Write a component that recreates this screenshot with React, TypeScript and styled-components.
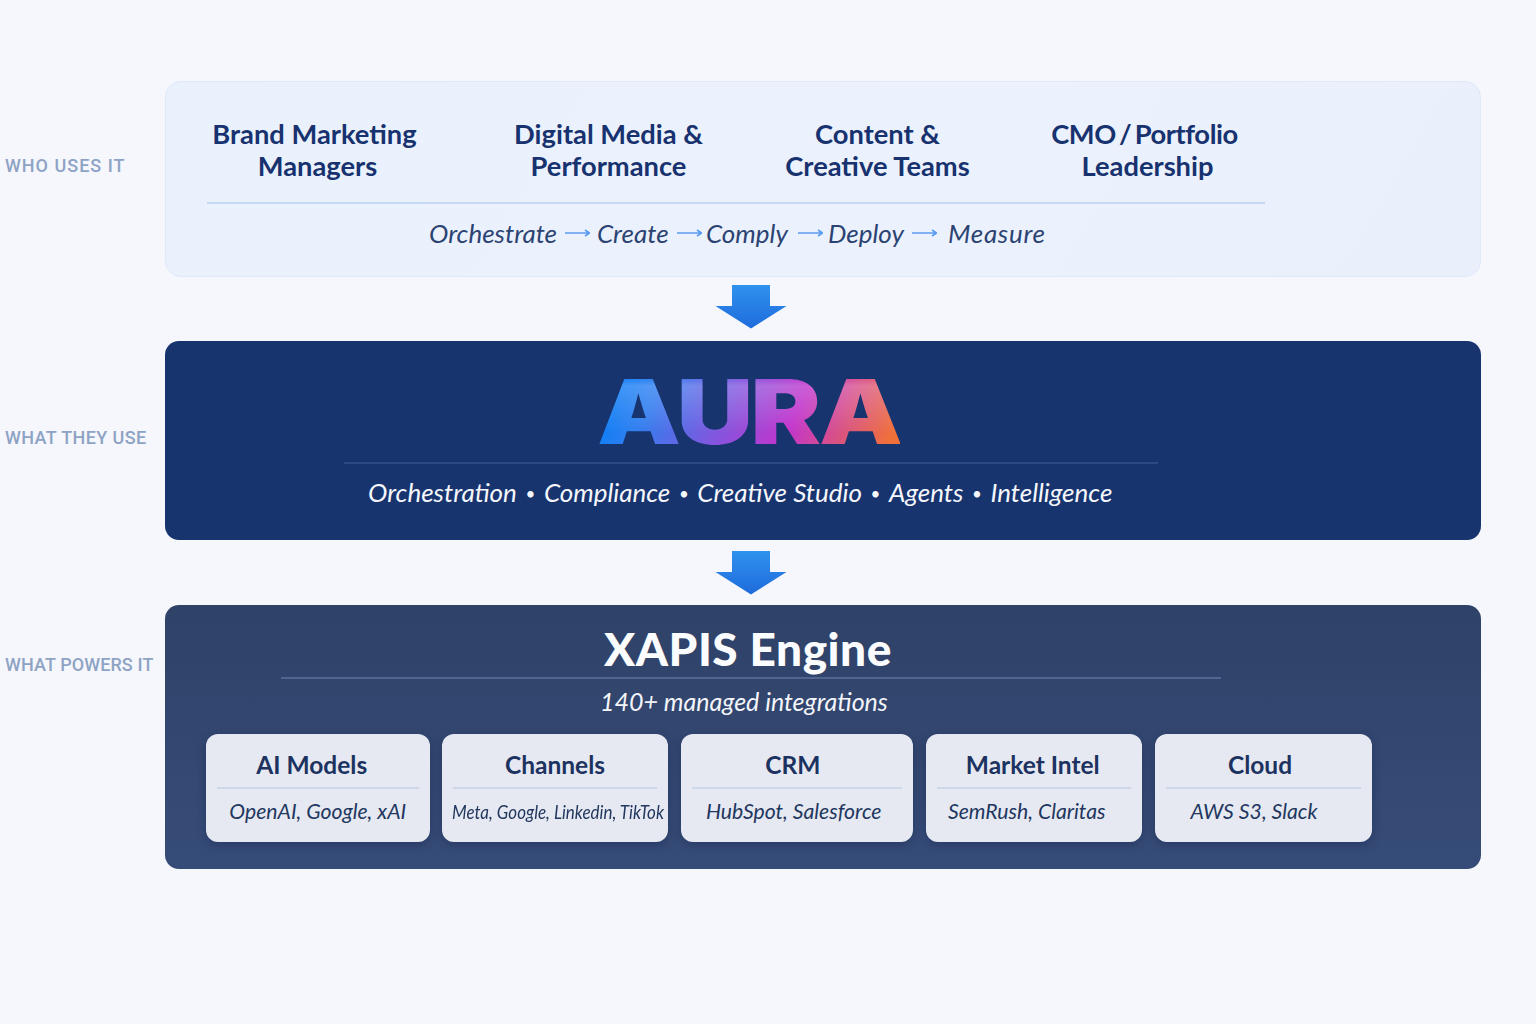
import React from "react";
import styled, { createGlobalStyle } from "styled-components";

const GlobalStyle = createGlobalStyle`
  html, body { margin: 0; padding: 0; }
  body {
    background: #f5f7fc;
    font-family: "Lato", "Liberation Sans", sans-serif;
  }
`;

const Page = styled.div`
  width: 1536px;
  height: 1024px;
  padding: 81px 55px 0 5px;
  box-sizing: border-box;
  overflow: hidden;
`;
const Row = styled.section`
  display: grid;
  grid-template-columns: 160px 1316px;
`;
const SideLabel = styled.div<{ $top: number; $ls: number }>`
  padding-top: ${(p) => p.$top}px;
  font-family: "Roboto", sans-serif;
  font-size: 18px;
  line-height: 24px;
  font-weight: 500;
  letter-spacing: ${(p) => p.$ls}px;
  color: #8ea3c4;
  white-space: nowrap;
`;
const UsersPanel = styled.div`
  height: 196px;
  box-sizing: border-box;
  padding: 36px 0 0 41px;
  background: linear-gradient(120deg, #e9f1fc 0%, #ecf2fd 60%, #e9f0fb 100%);
  border: 1px solid #dfe9f9;
  border-radius: 16px;
`;
const Inner = styled.div`
  width: 1058px;
`;
const Names = styled.div`
  display: flex;
  padding: 0 0 20px 4px;
  border-bottom: 2px solid #c5d9f5;
`;
const Name = styled.div<{ $w: number; $after: number }>`
  width: ${(p) => p.$w}px;
  margin-right: ${(p) => p.$after}px;
  flex: none;
  text-align: center;
  font-size: 27.3px;
  line-height: 32px;
  font-weight: 700;
  color: #17326f;
  white-space: nowrap;
`;
const NameLine = styled.span<{ $shift?: number; $tight?: boolean }>`
  display: block;
  padding-left: ${(p) => (p.$shift || 0) * 2}px;
  word-spacing: ${(p) => (p.$tight ? "-3px" : "0")};
  letter-spacing: ${(p) => (p.$tight ? "-0.4px" : "0")};
`;
const Flow = styled.div`
  display: flex;
  align-items: center;
  height: 30px;
  margin-top: 14px;
  padding-left: 222px;
  font-size: 26px;
  font-style: italic;
  color: #2b4373;
`;
const Word = styled.span<{ $w: number; $wide?: boolean }>`
  width: ${(p) => p.$w}px;
  flex: none;
  white-space: nowrap;
  letter-spacing: ${(p) => (p.$wide ? "0.7px" : "0")};
`;
const ArrowSvg = styled.svg<{ $l: number; $r: number }>`
  flex: none;
  width: 25px;
  height: 10px;
  margin: 0 ${(p) => p.$r}px 0 ${(p) => p.$l}px;
`;
const FlowArrow = ({ l, r }: { l: number; r: number }) => (
  <ArrowSvg $l={l} $r={r} viewBox="0 0 25 10">
    <path d="M0 5H24M20 2L24.5 5L20 8" fill="none" stroke="#5c9cf0" strokeWidth="1.6" />
  </ArrowSvg>
);
const ArrowWrap = styled.div`
  display: flex;
  justify-content: center;
  margin-left: 160px;
  width: 1172px;
  height: 64px;
  box-sizing: border-box;
  padding-top: 8px;
`;
const ArrowGap = styled(ArrowWrap)`
  height: 65px;
  padding-top: 11px;
`;
const DownSvg = styled.svg`
  width: 72px;
  height: 44px;
`;
const DownArrow = () => (
  <DownSvg viewBox="0 0 72 44">
    <defs>
      <linearGradient id="down" x1="0" y1="0" x2="0" y2="1">
        <stop offset="0" stopColor="#2f92ee" />
        <stop offset="1" stopColor="#1f6bdc" />
      </linearGradient>
    </defs>
    <path d="M17 0H55V21H71.500L36 43.500L0.500 21H17Z" fill="url(#down)" />
  </DownSvg>
);
const AuraPanel = styled.div`
  height: 199px;
  box-sizing: border-box;
  padding-top: 21px;
  background: #17346f;
  border-radius: 14px;
  display: flex;
  flex-direction: column;
`;
const AuraTitle = styled.div`
  align-self: flex-start;
  margin-left: 432px;
  height: 100px;
  font-family: "Inter", sans-serif;
  font-size: 90px;
  line-height: 100px;
  font-weight: 900;
  letter-spacing: -2px;
  transform: scaleX(1.175);
  transform-origin: left center;
  background:
    linear-gradient(180deg, rgba(255, 255, 255, 0) 15%, rgba(255, 255, 255, 0.2) 24%, rgba(255, 255, 255, 0) 72%),
    linear-gradient(112deg, #0a7df6 8%, #2f7ff0 20%, #8a52dc 46%, #c235cc 64%, #f0703a 94%);
  -webkit-background-clip: text;
  background-clip: text;
  color: transparent;
`;
const AuraRule = styled.div`
  width: 814px;
  margin: 0 0 0 179px;
  border-top: 2px solid #2c4a85;
`;
const Features = styled.div`
  margin: 12px 0 0 203px;
  font-size: 26px;
  line-height: 32px;
  font-style: italic;
  color: #f5f7fc;
  white-space: nowrap;
`;
const Dot = styled.span`
  display: inline-block;
  width: 27px;
  text-align: center;
  font-size: 17px;
  font-style: normal;
  vertical-align: 2px;
`;
const XapisPanel = styled.div`
  height: 264px;
  box-sizing: border-box;
  padding-top: 17px;
  background: linear-gradient(180deg, #2f4268 0%, #364c78 100%);
  border-radius: 14px;
`;
const XapisTitle = styled.div`
  margin-left: 439px;
  font-size: 46px;
  line-height: 54px;
  font-weight: 900;
  letter-spacing: 0.5px;
  color: #fbfcfe;
  white-space: nowrap;
`;
const XapisRule = styled.div`
  width: 940px;
  margin: 1px 0 0 116px;
  border-top: 2px solid #50658f;
`;
const XapisSub = styled.div`
  margin: 6px 0 0 435px;
  font-size: 25px;
  line-height: 32px;
  font-style: italic;
  color: #f3f5fa;
  white-space: nowrap;
`;
const Cards = styled.div`
  display: flex;
  gap: 12.5px;
  margin: 17px 0 0 41px;
`;
const Card = styled.div<{ $w: number }>`
  width: ${(p) => p.$w}px;
  height: 108px;
  box-sizing: border-box;
  padding: 14px 11px 0;
  background: #e6e9f1;
  border-radius: 12px;
  box-shadow: 0 3px 10px rgba(16, 30, 66, 0.35);
  text-align: center;
`;
const CardTitle = styled.div<{ $shift: number }>`
  height: 41px;
  box-sizing: border-box;
  padding-right: ${(p) => p.$shift * 2}px;
  font-size: 24.5px;
  line-height: 34px;
  font-weight: 700;
  color: #1c3260;
  border-bottom: 2px solid #cdd8e9;
  white-space: nowrap;
`;
const CardText = styled.div<{ $left: number; $right: number }>`
  margin: 8px -11px 0;
  padding: 0 ${(p) => p.$right}px 0 ${(p) => p.$left}px;
  font-size: 21.2px;
  line-height: 28px;
  font-style: italic;
  color: #22375f;
  white-space: nowrap;
`;
const SqueezedText = styled.span`
  display: inline-block;
  font-size: 19px;
  transform: scaleX(0.895);
  transform-origin: left center;
`;

const cards = [
  { title: "AI Models", text: "OpenAI, Google, xAI", w: 223.5, titleShift: 6, left: 0, right: 0 },
  { title: "Channels", text: "Meta, Google, Linkedin, TikTok", w: 226, titleShift: 0, left: 10, right: 0, small: true },
  { title: "CRM", text: "HubSpot, Salesforce", w: 232.5, titleShift: 4, left: 0, right: 6 },
  { title: "Market Intel", text: "SemRush, Claritas", w: 216.5, titleShift: 1, left: 0, right: 14 },
  { title: "Cloud", text: "AWS S3, Slack", w: 217, titleShift: 3, left: 0, right: 18 },
];

export default function App() {
  return (
    <Page>
      <GlobalStyle />
      <Row>
        <SideLabel $top={73} $ls={1}>WHO USES IT</SideLabel>
        <UsersPanel>
          <Inner>
            <Names>
              <Name $w={207} $after={96}>
                <NameLine>Brand Marketing</NameLine>
                <NameLine $shift={3}>Managers</NameLine>
              </Name>
              <Name $w={189} $after={82}>
                <NameLine>Digital Media &amp;</NameLine>
                <NameLine>Performance</NameLine>
              </Name>
              <Name $w={185} $after={80}>
                <NameLine>Content &amp;</NameLine>
                <NameLine>Creative Teams</NameLine>
              </Name>
              <Name $w={189} $after={0}>
                <NameLine $tight>CMO / Portfolio</NameLine>
                <NameLine $shift={3}>Leadership</NameLine>
              </Name>
            </Names>
            <Flow>
              <Word $w={128}>Orchestrate</Word>
              <FlowArrow l={8} r={7} />
              <Word $w={72}>Create</Word>
              <FlowArrow l={8} r={4} />
              <Word $w={83}>Comply</Word>
              <FlowArrow l={9} r={5} />
              <Word $w={76}>Deploy</Word>
              <FlowArrow l={8} r={11} />
              <Word $w={97} $wide>Measure</Word>
            </Flow>
          </Inner>
        </UsersPanel>
      </Row>
      <ArrowWrap><DownArrow /></ArrowWrap>
      <Row>
        <SideLabel $top={85} $ls={0.4}>WHAT THEY USE</SideLabel>
        <AuraPanel>
          <AuraTitle>AURA</AuraTitle>
          <AuraRule />
          <Features>
            Orchestration<Dot>•</Dot>Compliance<Dot>•</Dot>Creative Studio<Dot>•</Dot>Agents<Dot>•</Dot>Intelligence
          </Features>
        </AuraPanel>
      </Row>
      <ArrowGap><DownArrow /></ArrowGap>
      <Row>
        <SideLabel $top={48} $ls={0.1}>WHAT POWERS IT</SideLabel>
        <XapisPanel>
          <XapisTitle>XAPIS Engine</XapisTitle>
          <XapisRule />
          <XapisSub>140+ managed integrations</XapisSub>
          <Cards>
            {cards.map((c) => (
              <Card key={c.title} $w={c.w}>
                <CardTitle $shift={c.titleShift}>{c.title}</CardTitle>
                <CardText $left={c.left} $right={c.right}>
                  {c.small ? <SqueezedText>{c.text}</SqueezedText> : c.text}
                </CardText>
              </Card>
            ))}
          </Cards>
        </XapisPanel>
      </Row>
    </Page>
  );
}
